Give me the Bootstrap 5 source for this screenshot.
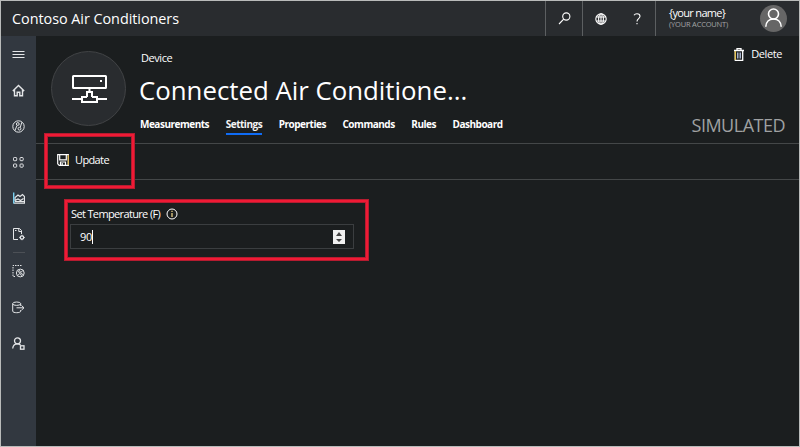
<!DOCTYPE html>
<html lang="en">
<head>
<meta charset="utf-8">
<meta name="viewport" content="width=device-width, initial-scale=1">
<title>Contoso Air Conditioners</title>
<link href="https://cdn.jsdelivr.net/npm/bootstrap@5.3.0/dist/css/bootstrap.min.css" rel="stylesheet">
<style>
body{font-family:"Open Sans","Noto Sans",sans-serif;background:#1b1e1f;color:#fff;font-size:11px;line-height:16px;white-space:nowrap}
svg{display:block;fill:none;stroke:currentColor;flex:none}
.app-frame{height:447px;border:1px solid #b9bbba;background:#1b1e1f}
.topbar{height:35px;background:#292c2f}
.brand{font-size:14.4px;padding-left:11px;letter-spacing:-.04px;line-height:35px}
.top-cell{border-left:1px solid #5c5f61;height:35px}
.cell-search{width:37px}
.cell-tools{width:73px}
.globe{margin-left:12px}
.help{margin-left:26px}
.cell-user{width:144px;padding-left:13px;padding-right:12px}
.user-block{margin-top:-5px}
.user-name{font-size:11px;line-height:15px;letter-spacing:-.67px}
.user-acct{font-size:7.5px;line-height:8px;color:#a3a5a6;letter-spacing:-.2px}
.avatar{width:27px;height:27px;background:#666}
.side{width:35px;background:#323840;color:#e4e6e8}
.side a{height:36px;color:inherit}
.side .rule{width:12px;height:1px;background:#4c5056;margin:0 auto}
.device-head{height:108px;border-bottom:1px solid #444748;padding:0 14px 0 15px}
.device-icon{width:75px;height:75px;margin-top:15px;background:#292c2f;border:1px solid #414345;padding:1px 0 0 2px}
.device-info{margin-left:13px;width:366px}
.kind{font-size:11px;letter-spacing:-.45px;margin:14px 0 0 2px}
.device-name{font-size:25.8px;line-height:36px;margin:6px 0 0;letter-spacing:0;font-weight:400}
.tabs{margin:8px 0 0 1px;gap:16.600px;font-weight:700;font-size:10px}
.tabs a{color:#f4f4f4;text-decoration:none;line-height:17px;height:19px;letter-spacing:-.49px}
.tabs a.active{border-bottom:2px solid #0f6cf5}
.delete-btn{margin-top:10px;letter-spacing:-.42px;margin-right:3px}
.trash{margin-right:7px}
.simulated{font-size:18px;line-height:24px;color:#9fa1a2;letter-spacing:-.5px;margin-bottom:6px}
.toolbar{height:36px;border-bottom:1px solid #444748;padding:0 0 3px 21px}
.update-label{margin-left:6px;letter-spacing:-.62px}
.field{padding:26px 0 0 34px;width:318px}
.field label{letter-spacing:-.64px;padding-left:1px}
.info{margin-left:6px}
.num-box{height:25px;border:1px solid #3b3e40;margin-top:2px;padding:0 8px 0 9px;letter-spacing:-.4px}
.caret{width:1px;height:14px;background:#fff}
.spin{width:12px;height:14px;background:#f0f0f0;color:#444}
.callout{position:absolute;border:2px solid #f01a35;box-shadow:0 0 0 1px #b51c30,inset 0 0 0 1px #b51c30;pointer-events:none}
.callout-update{left:45px;top:134px;width:89px;height:54px}
.callout-field{left:65px;top:200px;width:303px;height:60px}
</style>
</head>
<body>
<div class="app-frame d-flex flex-column overflow-hidden position-relative">
  <header class="topbar d-flex align-items-center flex-shrink-0">
    <div class="brand me-auto">Contoso Air Conditioners</div>
    <div class="top-cell cell-search d-flex align-items-center justify-content-center">
      <svg width="13" height="13" viewBox="0 0 13 13" stroke-width="1.1"><circle cx="8.3" cy="4.5" r="3.6"/><path d="M5.7 7.2 1 12"/></svg>
    </div>
    <div class="top-cell cell-tools d-flex align-items-center">
      <svg class="globe" width="12" height="12" viewBox="0 0 12 12" stroke-width="1.1"><circle cx="6" cy="6" r="5.2"/><ellipse cx="6" cy="6" rx="2.4" ry="5.2"/><path d="M1.300 4h9.400M1.300 8h9.400M6 1v10"/></svg>
      <svg class="help" width="8" height="12" viewBox="0 0 8 12" stroke-width="1.1"><path d="M1 2.200Q2 .8 4 .8C6 .8 7 1.900 7 3.300 7 5.500 4 5.800 4 8.400M4 10v1.300"/></svg>
    </div>
    <div class="top-cell cell-user d-flex align-items-center justify-content-between">
      <div class="user-block">
        <div class="user-name">{your name}</div>
        <div class="user-acct">(YOUR ACCOUNT)</div>
      </div>
      <div class="avatar rounded-circle">
        <svg width="27" height="27" viewBox="0 0 27 27" stroke-width="1.600"><circle cx="13.500" cy="9" r="5"/><path d="M5.800 21.800C6 17 9 14 13.500 14s7.500 3 7.700 7.800"/></svg>
      </div>
    </div>
  </header>
  <div class="d-flex flex-grow-1">
    <nav class="side flex-shrink-0 d-flex flex-column" aria-label="Main">
      <a class="d-flex align-items-center justify-content-center"><svg width="13" height="8" viewBox="0 0 13 8" stroke="#fff"><path d="M.5 1.500h12M.5 4.500h12M.5 7.500h12"/></svg></a>
      <a class="d-flex align-items-center justify-content-center"><svg width="13" height="13" viewBox="0 0 13 13" stroke-width="1.400"><path d="M.8 6.900 6.500 1.400l5.700 5.500M2.500 5.800v6h2.700V8.300h2.600v3.500h2.700v-6"/></svg></a>
      <a class="d-flex align-items-center justify-content-center"><svg width="13" height="13" viewBox="0 0 13 13"><circle cx="6.500" cy="6.500" r="5.700"/><circle cx="5.800" cy="4" r="1.400"/><circle cx="7.500" cy="8.700" r="1.400"/><path d="M2.800 10.800 5 5.500M8.300 7.300 9.800 2.300"/></svg></a>
      <a class="d-flex align-items-center justify-content-center"><svg width="11" height="11" viewBox="0 0 11 11"><rect x=".5" y=".5" width="3.200" height="3.200" rx=".8"/><rect x="7" y=".5" width="3.200" height="3.200" rx=".8"/><rect x=".5" y="7" width="3.200" height="3.200" rx=".8"/><rect x="7" y="7" width="3.200" height="3.200" rx=".8"/></svg></a>
      <a class="d-flex align-items-center justify-content-center"><svg width="12" height="12" viewBox="0 0 12 12" stroke-width="1.200" stroke="#fff"><path d="M.7 11.200h10.800V4.500L9.500 2.500 7 4.500 5 3 2 5.500v3l3-1.500 2.500 1.500 3-2M2 9.500h9"/><path stroke="#79cff0" stroke-width="1.400" d="M.7 .5v11"/></svg></a>
      <a class="d-flex align-items-center justify-content-center"><svg width="13" height="13" viewBox="0 0 13 13"><path d="M6 11.500H1.500v-11h6l2 2V6M6.800.8v2.700H9.500M3 2.500h1.500"/><circle cx="10" cy="9.500" r="1.700" stroke-width="1.300"/><path d="M10 6.800v1m0 3.400v1m-2.700-2.700h1m3.400 0h1"/></svg></a>
      <div class="rule"></div>
      <a class="d-flex align-items-center justify-content-center"><svg width="13" height="13" viewBox="0 0 13 13"><path stroke-dasharray="1.500 1" d="M3 11.500H1v-11h8.500"/><circle cx="8.300" cy="8" r="3.900"/><circle cx="7.300" cy="6.500" r=".9"/><circle cx="9.500" cy="9.400" r=".9"/><path d="M5.800 10.500 11 5.300"/></svg></a>
      <a class="d-flex align-items-center justify-content-center"><svg width="13" height="13" viewBox="0 0 13 13"><ellipse cx="4.700" cy="2.700" rx="4" ry="1.700"/><path d="M.7 2.700v7.500c0 2 8 2 8 0V9M8.700 2.700V5M4.500 6.800h7.300M9.500 4.500l2.500 2.300-2.500 2.300"/></svg></a>
      <a class="d-flex align-items-center justify-content-center"><svg width="13" height="13" viewBox="0 0 13 13" stroke="#fff" stroke-width="1.300"><circle cx="5.500" cy="3.800" r="3"/><path d="M.7 11.500C1 8.500 3 6.800 5.500 6.800q1.800 0 3 1.200"/><rect x="8.500" y="8.800" width="3.500" height="3.400"/></svg></a>
    </nav>
    <main class="flex-grow-1">
      <section class="device-head d-flex">
        <div class="device-icon rounded-circle d-flex align-items-center justify-content-center flex-shrink-0">
          <svg width="35" height="28" viewBox="0 0 35 28" stroke="#fff" stroke-width="2"><rect x="1" y="1" width="33" height="12" rx=".5"/><path d="M0 24h9M26 24h9M17.500 14v3M15 22v-5h5v5M10 22h5M20 22h5M10 21v6h15v-6M28 6h2"/></svg>
        </div>
        <div class="device-info">
          <div class="kind">Device</div>
          <h1 class="device-name">Connected Air Conditione...</h1>
          <nav class="tabs d-flex" aria-label="Device">
            <a>Measurements</a><a class="active">Settings</a><a>Properties</a><a>Commands</a><a>Rules</a><a>Dashboard</a>
          </nav>
        </div>
        <div class="ms-auto d-flex flex-column justify-content-between align-items-end">
          <div class="delete-btn d-flex align-items-center">
            <svg class="trash" width="10" height="13" viewBox="0 0 10 13" stroke-width="1.300"><path d="M0 2.500h10M3 2V.7h4V2M1.300 3v9.300h7.400V3"/><path stroke="#e5c04c" d="M1.300 3v9"/><path d="M3.500 4.500v6M5 4.500v6M6.500 4.500v6" stroke-width=".9" stroke="#b9c3df"/></svg>
            Delete
          </div>
          <div class="simulated">SIMULATED</div>
        </div>
      </section>
      <section class="toolbar d-flex align-items-center">
        <svg width="12" height="12" viewBox="0 0 12 12" stroke-width="1.200"><path d="M.7.7h10.600v10.600H2.200L.7 9.800zM2.700.7v5.100h6.600V.7M3.500 11V8h5v3M5.200 9v2"/><path stroke="#dfb74d" d="M11.300 1v10"/></svg>
        <span class="update-label">Update</span>
      </section>
      <section class="field">
        <label class="d-flex align-items-center" for="temp">Set Temperature (F)
          <svg class="info" width="12" height="12" viewBox="0 0 12 12"><circle cx="6" cy="6" r="5"/><path stroke="#e8cf86" stroke-width="1.300" d="M6 5v4M6 2.800v1.200"/></svg>
        </label>
        <div class="num-box d-flex align-items-center" id="temp">
          <span>90</span><span class="caret"></span>
          <svg class="spin ms-auto" viewBox="0 0 12 14"><path fill="currentColor" stroke="none" d="M3 6 6 2l3 4zM3 9h6l-3 3z"/></svg>
        </div>
      </section>
    </main>
  </div>
</div>
<div class="callout callout-update"></div>
<div class="callout callout-field"></div>
<script src="https://cdn.jsdelivr.net/npm/bootstrap@5.3.0/dist/js/bootstrap.bundle.min.js"></script>
</body>
</html>
